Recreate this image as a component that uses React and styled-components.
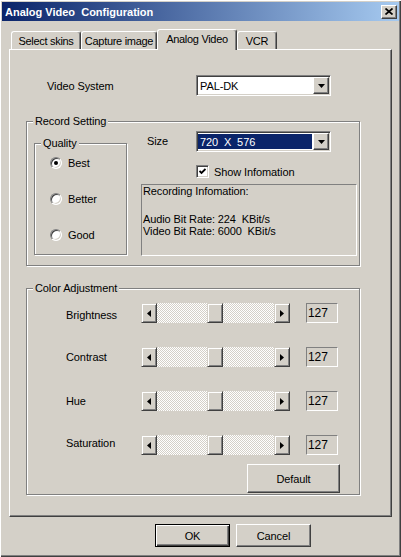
import React from "react";
import styled, { createGlobalStyle } from "styled-components";

const GlobalStyle = createGlobalStyle`
	html, body {
		margin: 0;
		padding: 0;
		background: #d4d0c8;
	}
	body {
		font-family: "Liberation Sans", Arial, sans-serif;
		font-size: 11px;
		letter-spacing: -0.1px;
		color: #000;
	}
`;

const raised = `
	border: 1px solid;
	border-color: #fff #404040 #404040 #fff;
	box-shadow: inset -1px -1px 0 #808080;
`;

const sunken = `
	border: 1px solid;
	border-color: #808080 #fff #fff #808080;
	box-shadow: inset 1px 1px 0 #404040, inset -1px -1px 0 #d4d0c8;
`;

// shift = how far the label sits below the slider's middle
const COLOR_ROWS = [
	{ label: "Brightness", value: 127, shift: 2 },
	{ label: "Contrast", value: 127, shift: 0 },
	{ label: "Hue", value: 127, shift: 0 },
	{ label: "Saturation", value: 127, shift: -2 },
];

const QUALITY = ["Best", "Better", "Good"];

const TABS = [
	{ label: "Select skins", width: 70 },
	{ label: "Capture image", width: 76 },
	{ label: "Analog Video", width: 80, active: true },
	{ label: "VCR", width: 40 },
];

const DownArrow = () => (
	<svg width="7" height="4" viewBox="0 0 7 4">
		<polygon points="0,0 7,0 3.5,4" fill="#000" />
	</svg>
);

const SideArrow = ({ dir }) => (
	<svg width="4" height="7" viewBox="0 0 4 7">
		{dir === "left" ? (
			<polygon points="4,0 4,7 0,3.5" fill="#000" />
		) : (
			<polygon points="0,0 0,7 4,3.5" fill="#000" />
		)}
	</svg>
);

const Combo = ({ value, selected }) => (
	<ComboBox>
		<ComboText $selected={selected}>{value}</ComboText>
		<DropButton>
			<DownArrow />
		</DropButton>
	</ComboBox>
);

const Slider = ({ value }) => {
	const trackWidth = 149 - 32;
	const left = Math.round((value / 255) * (trackWidth - 16));
	return (
		<ScrollBar>
			<ArrowButton>
				<SideArrow dir="left" />
			</ArrowButton>
			<Track>
				<Thumb style={{ left }} />
			</Track>
			<ArrowButton>
				<SideArrow dir="right" />
			</ArrowButton>
		</ScrollBar>
	);
};

const App = () => {
	return (
		<>
			<GlobalStyle />
			<Window>
				<TitleBar>
					<Title>Analog Video  Configuration</Title>
					<CloseButton>
						<svg width="8" height="7" viewBox="0 0 8 7">
							<path
								d="M0.5 0.5 L7.5 6.5 M7.5 0.5 L0.5 6.5"
								stroke="#000"
								strokeWidth="1.7"
							/>
						</svg>
					</CloseButton>
				</TitleBar>

				<TabRow>
					{TABS.map((t) => (
						<Tab key={t.label} $width={t.width} $active={t.active}>
							{t.label}
						</Tab>
					))}
				</TabRow>

				<Panel>
					<VideoRow>
						<RowLabel $width={149}>Video System</RowLabel>
						<Combo value="PAL-DK" />
					</VideoRow>

					<RecordGroup>
						<Legend>Record Setting</Legend>
						<QualityGroup>
							<Legend>Quality</Legend>
							{QUALITY.map((q, i) => (
								<RadioRow key={q}>
									<Radio $checked={i === 0} />
									<span>{q}</span>
								</RadioRow>
							))}
						</QualityGroup>

						<RightColumn>
							<SizeRow>
								<SizeLabel>Size</SizeLabel>
								<Combo value="720  X  576" selected />
							</SizeRow>
							<CheckRow>
								<CheckBox>
									<svg width="7" height="7" viewBox="0 0 7 7">
										<path
											d="M0.5 3 L2.5 5 L6.5 1"
											stroke="#000"
											strokeWidth="1.8"
											fill="none"
										/>
									</svg>
								</CheckBox>
								<span>Show Infomation</span>
							</CheckRow>
							<InfoBox>
								<InfoTitle>Recording Infomation:</InfoTitle>
								<InfoLines>
									<div>Audio Bit Rate: 224  KBit/s</div>
									<div>Video Bit Rate: 6000  KBit/s</div>
								</InfoLines>
							</InfoBox>
						</RightColumn>
					</RecordGroup>

					<ColorGroup>
						<Legend>Color Adjustment</Legend>
						<SliderList>
							{COLOR_ROWS.map((r) => (
								<SliderRow key={r.label}>
									<RowLabel $width={75} $shift={r.shift}>
										{r.label}
									</RowLabel>
									<Slider value={r.value} />
									<ValueBox>{r.value}</ValueBox>
								</SliderRow>
							))}
						</SliderList>
						<DefaultButton>Default</DefaultButton>
					</ColorGroup>
				</Panel>

				<ButtonRow>
					<DialogButton $default>OK</DialogButton>
					<DialogButton>Cancel</DialogButton>
				</ButtonRow>
			</Window>
		</>
	);
};

const Window = styled.div`
	width: 401px;
	height: 557px;
	box-sizing: border-box;
	padding: 2px;
	background: #d4d0c8;
	box-shadow: inset 1px 1px 0 #fff, inset -1px -1px 0 #404040,
		inset -2px -2px 0 #808080;
	display: flex;
	flex-direction: column;
	overflow: hidden;
`;

const TitleBar = styled.div`
	height: 19px;
	flex-shrink: 0;
	display: flex;
	align-items: center;
	padding: 0 2px 0 3px;
	background: linear-gradient(to right, #0a246a, #a6caf0);
`;

const Title = styled.span`
	color: #fff;
	font-weight: bold;
	font-size: 11px;
	letter-spacing: 0;
	white-space: pre;
`;

const CloseButton = styled.div`
	margin-left: auto;
	width: 16px;
	height: 14px;
	box-sizing: border-box;
	background: #d4d0c8;
	${raised}
	display: flex;
	align-items: center;
	justify-content: center;
`;

const TabRow = styled.div`
	height: 20px;
	margin-top: 8px;
	padding-left: 9px;
	display: flex;
	align-items: flex-end;
	flex-shrink: 0;
`;

const Tab = styled.div`
	position: relative;
	z-index: ${(p) => (p.$active ? 2 : 1)};
	width: ${(p) => p.$width}px;
	height: ${(p) => (p.$active ? 21 : 18)}px;
	margin-bottom: ${(p) => (p.$active ? -1 : 0)}px;
	box-sizing: border-box;
	background: #d4d0c8;
	border-top: 1px solid #fff;
	border-left: 1px solid #fff;
	border-right: 1px solid #404040;
	border-radius: 3px 3px 0 0;
	box-shadow: inset -1px 0 0 #808080;
	display: flex;
	align-items: center;
	justify-content: center;
	padding-bottom: ${(p) => (p.$active ? 2 : 0)}px;
	letter-spacing: -0.3px;
	white-space: nowrap;
`;

const Panel = styled.div`
	margin-left: 7px;
	width: 383px;
	height: 468px;
	flex-shrink: 0;
	box-sizing: border-box;
	border: 1px solid;
	border-color: #fff #404040 #404040 #fff;
	box-shadow: inset -1px -1px 0 #808080;
	display: flex;
	flex-direction: column;
	align-items: flex-start;
`;

const VideoRow = styled.div`
	margin-top: 25px;
	padding-left: 37px;
	height: 21px;
	display: flex;
	align-items: center;
`;

const RowLabel = styled.span`
	width: ${(p) => p.$width}px;
	padding-top: ${(p) => Math.max(0, (p.$shift || 0) * 2)}px;
	padding-bottom: ${(p) => Math.max(0, -(p.$shift || 0) * 2)}px;
	flex-shrink: 0;
	white-space: nowrap;
`;

const ComboBox = styled.div`
	width: 135px;
	height: 21px;
	box-sizing: border-box;
	padding: 1px;
	background: #fff;
	${sunken}
	display: flex;
`;

const ComboText = styled.div`
	flex: 1;
	display: flex;
	align-items: center;
	padding-left: 2px;
	margin: 1px 1px 1px 0;
	white-space: pre;
	background: ${(p) => (p.$selected ? "#0a246a" : "#fff")};
	color: ${(p) => (p.$selected ? "#fff" : "#000")};
`;

const DropButton = styled.div`
	width: 16px;
	height: 17px;
	box-sizing: border-box;
	background: #d4d0c8;
	${raised}
	display: flex;
	align-items: center;
	justify-content: center;
`;

const GroupBox = styled.div`
	position: relative;
	box-sizing: border-box;
	border: 1px solid #808080;
	box-shadow: inset 1px 1px 0 #fff, 1px 1px 0 #fff;
`;

const Legend = styled.span`
	position: absolute;
	top: -7px;
	left: 6px;
	padding: 0 2px;
	line-height: 13px;
	background: #d4d0c8;
	white-space: nowrap;
`;

const RecordGroup = styled(GroupBox)`
	margin-top: 25px;
	margin-left: 16px;
	width: 334px;
	height: 145px;
	padding: 9px 0 0 7px;
	display: flex;
	align-items: flex-start;
`;

const QualityGroup = styled(GroupBox)`
	margin-top: 12px;
	width: 93px;
	height: 112px;
	padding: 12px 0 0 15px;
	display: flex;
	flex-direction: column;
	gap: 22px;
`;

const RadioRow = styled.div`
	height: 14px;
	display: flex;
	align-items: center;
	gap: 6px;
`;

const Radio = styled.span`
	width: 12px;
	height: 12px;
	box-sizing: border-box;
	border-radius: 50%;
	background: #fff;
	border: 1px solid;
	border-color: #808080 #fff #fff #808080;
	box-shadow: inset 1px 1px 0 #404040, inset -1px -1px 0 #d4d0c8;
	display: flex;
	align-items: center;
	justify-content: center;

	&::after {
		content: "";
		width: 4px;
		height: 4px;
		border-radius: 50%;
		background: ${(p) => (p.$checked ? "#000" : "transparent")};
	}
`;

const RightColumn = styled.div`
	margin-left: 14px;
	display: flex;
	flex-direction: column;
`;

const SizeRow = styled.div`
	height: 21px;
	display: flex;
	align-items: center;
`;

const SizeLabel = styled.span`
	width: 55px;
	box-sizing: border-box;
	padding-left: 6px;
	padding-bottom: 2px;
`;

const CheckRow = styled.div`
	margin-top: 13px;
	padding-left: 55px;
	height: 13px;
	display: flex;
	align-items: center;
	gap: 5px;
`;

const CheckBox = styled.span`
	width: 13px;
	height: 13px;
	box-sizing: border-box;
	background: #fff;
	${sunken}
	display: flex;
	align-items: center;
	justify-content: center;
`;

const InfoBox = styled.div`
	margin-top: 6px;
	width: 216px;
	height: 72px;
	box-sizing: border-box;
	border: 1px solid;
	border-color: #808080 #fff #fff #808080;
	padding-left: 1px;
	white-space: pre;
`;

const InfoTitle = styled.div`
	line-height: 13px;
`;

const InfoLines = styled.div`
	margin-top: 15px;
	line-height: 12px;
`;

const ColorGroup = styled(GroupBox)`
	margin-top: 22px;
	margin-left: 16px;
	width: 334px;
	height: 207px;
	padding: 14px 0 0 39px;
	display: flex;
	flex-direction: column;
`;

const SliderList = styled.div`
	display: flex;
	flex-direction: column;
	gap: 24px;
`;

const SliderRow = styled.div`
	height: 20px;
	display: flex;
	align-items: center;
`;

const ScrollBar = styled.div`
	width: 149px;
	height: 20px;
	display: flex;
	flex-shrink: 0;
`;

const ArrowButton = styled.div`
	width: 16px;
	height: 20px;
	box-sizing: border-box;
	background: #d4d0c8;
	border: 1px solid;
	border-color: #d4d0c8 #404040 #404040 #d4d0c8;
	box-shadow: inset 1px 1px 0 #fff, inset -1px -1px 0 #808080;
	display: flex;
	align-items: center;
	justify-content: center;
`;

const Track = styled.div`
	position: relative;
	flex: 1;
	background: repeating-conic-gradient(#fff 0 25%, #d4d0c8 0 50%) 0 0 / 2px
		2px;
`;

const Thumb = styled.div`
	position: absolute;
	top: 0;
	width: 16px;
	height: 20px;
	box-sizing: border-box;
	background: #d4d0c8;
	border: 1px solid;
	border-color: #d4d0c8 #404040 #404040 #d4d0c8;
	box-shadow: inset 1px 1px 0 #fff, inset -1px -1px 0 #808080;
`;

const ValueBox = styled.div`
	margin-left: 16px;
	width: 32px;
	height: 20px;
	box-sizing: border-box;
	border: 1px solid;
	border-color: #808080 #fff #fff #808080;
	padding-left: 1px;
	display: flex;
	align-items: center;
	font-size: 12px;
`;

const buttonBase = `
	box-sizing: border-box;
	background: #d4d0c8;
	display: flex;
	align-items: center;
	justify-content: center;
	font-family: "Liberation Sans", Arial, sans-serif;
	font-size: 11px;
`;

const DefaultButton = styled.div`
	${buttonBase}
	margin-top: 9px;
	align-self: flex-end;
	margin-right: 19px;
	width: 93px;
	height: 29px;
	${raised}
`;

const ButtonRow = styled.div`
	margin-top: 7px;
	padding-left: 153px;
	display: flex;
	gap: 6px;
`;

const DialogButton = styled.div`
	${buttonBase}
	width: 75px;
	height: 23px;
	border: 1px solid;
	border-color: ${(p) =>
		p.$default ? "#000" : "#fff #404040 #404040 #fff"};
	box-shadow: ${(p) =>
		p.$default
			? "inset 1px 1px 0 #fff, inset -1px -1px 0 #404040, inset -2px -2px 0 #808080"
			: "inset -1px -1px 0 #808080"};
`;

export default App;
